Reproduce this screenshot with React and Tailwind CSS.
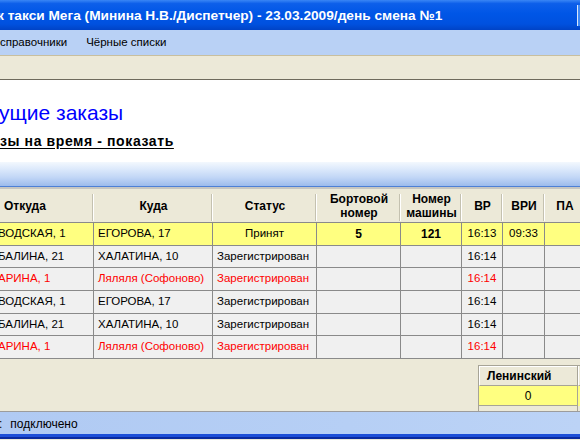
import React from "react";

const cols = "grid-cols-[94px_119px_104px_84px_61px_41px_42px_40px]";

const rows = [
  { h: "h-[23px]", from: "ВОДСКАЯ, 1", to: "ЕГОРОВА, 17", st: "Принят", bort: "5", num: "121", vr: "16:13", vri: "09:33", yellow: true },
  { h: "h-[22px]", from: "БАЛИНА, 21", to: "ХАЛАТИНА, 10", st: "Зарегистрирован", vr: "16:14" },
  { h: "h-[23px]", from: "АРИНА, 1", to: "Ляляля (Софоново)", st: "Зарегистрирован", vr: "16:14", red: true },
  { h: "h-[23px]", from: "ВОДСКАЯ, 1", to: "ЕГОРОВА, 17", st: "Зарегистрирован", vr: "16:14" },
  { h: "h-[22px]", from: "БАЛИНА, 21", to: "ХАЛАТИНА, 10", st: "Зарегистрирован", vr: "16:14" },
  { h: "h-[23px]", from: "АРИНА, 1", to: "Ляляля (Софоново)", st: "Зарегистрирован", vr: "16:14", red: true },
];

function Cell({ children, className = "" }) {
  return (
    <div className={"flex items-center overflow-hidden whitespace-nowrap border-r border-b border-[#8a8a8a] " + className}>
      {children}
    </div>
  );
}

function HeadCell({ children, className = "" }) {
  return (
    <div className={"relative flex items-center justify-center text-center font-bold leading-[14px] " + className}>
      {children}
      <div className="absolute right-0 top-[5px] bottom-[2px] w-[2px] border-l border-[#c4c1b0] border-r border-r-white" />
    </div>
  );
}

export default function App() {
  return (
    <div
      className="w-[580px] h-[440px] overflow-hidden bg-[#ece9d8] flex flex-col text-black"
      style={{ fontFamily: '"Liberation Sans", Arial, sans-serif' }}
    >
      {/* Title bar */}
      <div className="h-[30px] shrink-0 flex items-center bg-[linear-gradient(180deg,#3a86f5_0%,#0d5fea_12%,#0056e6_45%,#0051df_80%,#0043c6_100%)]">
        <div className="flex-1 overflow-hidden whitespace-nowrap pt-[2px] text-white font-bold text-[13.7px] -ml-[3px]">
          к такси Мега (Минина Н.В./Диспетчер) - 23.03.2009/день смена №1
        </div>
        <div className="shrink-0 w-[3px] h-[21px] border-l border-[#dbe7fb] bg-[#3f8af6]" />
      </div>

      {/* Menu bar */}
      <div className="h-[26px] shrink-0 flex items-center bg-[#b9d1f5] text-[11.5px] border-b border-[#c8bf9f]">
        <span>справочники</span>
        <span className="ml-[19px]">Чёрные списки</span>
      </div>

      {/* Toolbar */}
      <div className="h-[24px] shrink-0 bg-[#ece9d8] border-b border-[#6e6a5c]" />

      {/* White panel */}
      <div className="h-[82px] shrink-0 bg-white pt-[20px] whitespace-nowrap">
        <div className="text-[21px] leading-[26px] text-[#0000ff] -ml-[1px]">ущие заказы</div>
        <div className="mt-[7px] text-[14px] leading-[17px] font-bold tracking-[0.6px] underline underline-offset-[2px]">
          зы на время - показать
        </div>
      </div>

      {/* Gradient band */}
      <div className="h-[25px] shrink-0 border-b border-[#4d80d6] bg-[linear-gradient(180deg,#f3f8fe_0%,#dce9fb_30%,#c1d6f6_65%,#9cbbec_100%)]" />
      <div className="h-[2px] shrink-0 bg-[#c6c6c2]" />

      {/* Table header */}
      <div className={"grid shrink-0 h-[34px] text-[12px] bg-[#ece9d8] " + cols}>
        <HeadCell className="justify-start pl-[4px]">Откуда</HeadCell>
        <HeadCell>Куда</HeadCell>
        <HeadCell>Статус</HeadCell>
        <HeadCell>Бортовой<br />номер</HeadCell>
        <HeadCell>Номер<br />машины</HeadCell>
        <HeadCell>ВР</HeadCell>
        <HeadCell>ВРИ</HeadCell>
        <HeadCell>ПА</HeadCell>
      </div>

      {/* Rows */}
      <div className="shrink-0 border-t border-[#8a8a8a] -mt-[1px]">
        {rows.map((r, i) => {
          const bg = r.yellow ? "bg-[#ffff80]" : "bg-[#f0f0f0]";
          const tc = r.red ? "text-[#ff0000]" : "text-black";
          return (
            <div key={i} className={"grid text-[11.5px] " + cols + " " + r.h + " " + bg}>
              <Cell className={tc}><span className="-ml-[2px]">{r.from}</span></Cell>
              <Cell className={"pl-[4px] " + tc}>{r.to}</Cell>
              <Cell className={(r.yellow ? "justify-center " : "pl-[4px] ") + tc}>{r.st}</Cell>
              <Cell className="justify-center font-bold text-[12px]">{r.bort}</Cell>
              <Cell className="justify-center font-bold text-[12px]">{r.num}</Cell>
              <Cell className={"justify-center " + tc}>{r.vr}</Cell>
              <Cell className="justify-center">{r.vri}</Cell>
              <Cell>{""}</Cell>
            </div>
          );
        })}
      </div>

      {/* Lower area */}
      <div className="h-[52px] shrink-0 bg-[#ece9d8] pt-[6px] flex">
        <div className="ml-[478px] flex">
          <div className="w-[99px] flex flex-col border-l border-t border-[#a7a497]">
            <div className="h-[20px] flex items-center pl-[7px] font-bold text-[12px] border-b border-[#a7a497] border-l border-l-white border-t border-t-white">
              Ленинский
            </div>
            <div className="h-[20px] flex items-center justify-center bg-[#ffff80] text-[12px] border-b border-[#a7a497]">
              0
            </div>
          </div>
          <div className="w-[20px] flex flex-col border-l border-t border-[#a7a497]">
            <div className="h-[20px] border-b border-[#a7a497] border-l border-l-white" />
            <div className="h-[20px] bg-[#ffff80]" />
          </div>
        </div>
      </div>

      {/* Status bar */}
      <div className="h-[1px] shrink-0 bg-[#9c9c9c]" />
      <div className="h-[22px] shrink-0 flex items-center pt-[2px] bg-[linear-gradient(90deg,#b0caf3_0%,#b6cff5_60%,#bcd3f6_100%)] text-[12px] whitespace-nowrap">
        <span className="-ml-[1px]">:</span>
        <span className="ml-[8px]">подключено</span>
      </div>
      <div className="h-[3px] shrink-0 bg-[#1d4fd8]" />
      <div className="h-[2px] shrink-0 bg-[#0a2a9e]" />
    </div>
  );
}
